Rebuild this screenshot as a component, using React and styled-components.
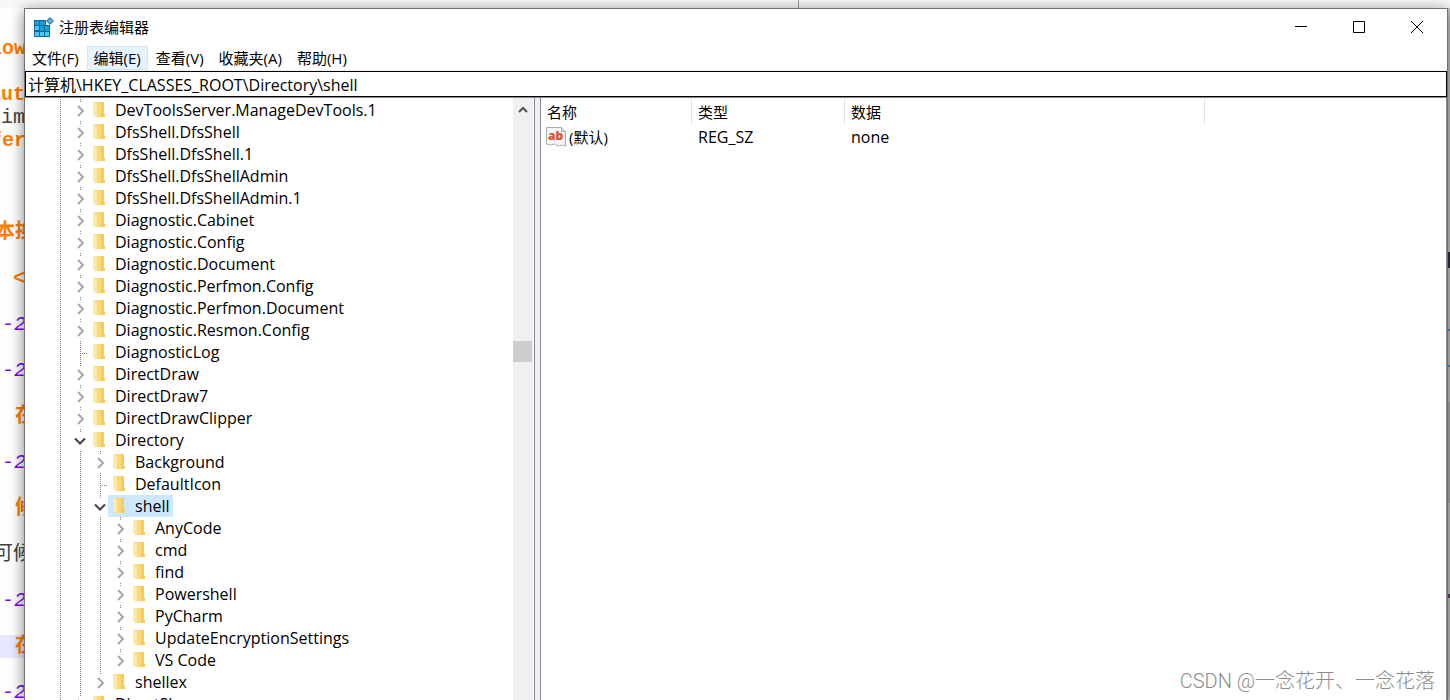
import React from 'react';
import styled, { createGlobalStyle, css } from 'styled-components';

const codeLines = [
  { text: 'low', indent: -10, color: '#ff8000', bold: true },
  {},
  { text: 'aut', indent: -11, color: '#ff8000', bold: true },
  { text: 'im', indent: 1, color: '#444' },
  { text: 'fer', indent: -10, color: '#ff8000', bold: true },
  {},
  {},
  {},
  { text: '本换', indent: -5, color: '#ff8000', bold: true },
  {},
  { text: '<', indent: 13, color: '#ff8000', bold: true },
  {},
  { text: '--2', indent: -10, color: '#8000ff', italic: true },
  {},
  { text: '--2', indent: -10, color: '#8000ff', italic: true },
  {},
  { text: '在', indent: 15, color: '#ff8000', bold: true },
  {},
  { text: '--2', indent: -10, color: '#8000ff', italic: true },
  {},
  { text: '候', indent: 15, color: '#ff8000', bold: true },
  {},
  { text: '可候', indent: -7, color: '#444' },
  {},
  { text: '--2', indent: -10, color: '#8000ff', italic: true },
  {},
  { text: '在', indent: 15, color: '#ff8000', bold: true, current: true },
  {},
  { text: '--2', indent: -10, color: '#8000ff', italic: true },
];

const menus = ['文件(F)', '编辑(E)', '查看(V)', '收藏夹(A)', '帮助(H)'];

const closed = (name, depth = 0) => ({ name, depth, state: 'closed' });
const open = (name, depth = 0) => ({ name, depth, state: 'open' });
const leaf = (name, depth = 0) => ({ name, depth, state: 'leaf' });

const keys = [
  closed('DevToolsServer.ManageDevTools.1'),
  closed('DfsShell.DfsShell'),
  closed('DfsShell.DfsShell.1'),
  closed('DfsShell.DfsShellAdmin'),
  closed('DfsShell.DfsShellAdmin.1'),
  closed('Diagnostic.Cabinet'),
  closed('Diagnostic.Config'),
  closed('Diagnostic.Document'),
  closed('Diagnostic.Perfmon.Config'),
  closed('Diagnostic.Perfmon.Document'),
  closed('Diagnostic.Resmon.Config'),
  leaf('DiagnosticLog'),
  closed('DirectDraw'),
  closed('DirectDraw7'),
  closed('DirectDrawClipper'),
  open('Directory'),
  closed('Background', 1),
  leaf('DefaultIcon', 1),
  { ...open('shell', 1), selected: true },
  closed('AnyCode', 2),
  closed('cmd', 2),
  closed('find', 2),
  closed('Powershell', 2),
  closed('PyCharm', 2),
  closed('UpdateEncryptionSettings', 2),
  { ...closed('VS Code', 2), last: true },
  { ...closed('shellex', 1), last: true },
  closed('DirectShow'),
];

function RegeditIcon() {
  return (
    <svg width="20" height="20" viewBox="0 0 20 20" aria-hidden="true">
      <path d="M0 3h12v5h4v12H0z" fill="#0a6c9c" />
      <path d="M1 9h4v4H1zM1 15h4v4H1zM6 15h4v4H6zM11 15h4v4h-4z" fill="#4cc8f4" />
      <path d="M1 4h4v4H1zM6 4h5v4H6zM6 9h4v5H6zM11 9h4v5h-4z" fill="#1a9fd8" />
      <path d="M16 0L20 4L16 8L12 4z" fill="#2f86ab" />
      <path d="M16 2L18 4L16 6L14 4z" fill="#6cc0e2" />
    </svg>
  );
}

function FolderIcon() {
  return (
    <svg width="13" height="18" viewBox="0 0 13 18" aria-hidden="true">
      <path d="M1 1h10v12l1 0v3H3z" fill="#fbd976" />
      <path d="M8 1h3v12h1v3H8z" fill="#f3cb62" />
      <path d="M0 1l4 2v14l-1 0l-3-3z" fill="#ffe9a6" />
    </svg>
  );
}

function StringIcon() {
  return (
    <svg width="20" height="20" viewBox="0 0 20 20" aria-hidden="true">
      <path d="M.5.5h15l4 4V19l-4-1-3 1-4-2-4 1-4-1z" fill="#f5f7f8" stroke="#a8adb0" />
      <path d="M15.500.5v4h4" fill="#dfe3e5" stroke="#a8adb0" />
      <text x="2" y="13" fontFamily="'Open Sans', sans-serif" fontWeight="800" fontSize="12" fill="#dc5434">ab</text>
    </svg>
  );
}

function Arrow({ open: isOpen }) {
  return (
    <svg width="12" height="12" viewBox="0 0 12 12" fill="none" strokeWidth="2" aria-hidden="true">
      {isOpen
        ? <path d="M1 3.500l5 5 5-5" stroke="#404040" />
        : <path d="M4 1l5 5-5 5" stroke="#a6a6a6" />}
    </svg>
  );
}

function TreeItem({ item }) {
  return (
    <Row>
      {Array.from({ length: item.depth + 1 }, (_, i) => <Guide key={i} />)}
      <Toggle $state={item.state} $last={item.last}>
        {item.state !== 'leaf' && (
          <ToggleButton aria-label={item.name} aria-expanded={item.state === 'open'}>
            <Arrow open={item.state === 'open'} />
          </ToggleButton>
        )}
      </Toggle>
      <Key $selected={item.selected}>
        <FolderIcon />
        {item.name}
      </Key>
    </Row>
  );
}

export default function App() {
  return (
    <Desktop>
      <GlobalStyle />
      <TopStrip><Pane /><Pane /></TopStrip>
      <Editor>
        {codeLines.map((line, i) => (
          <CodeLine key={i} $indent={line.indent} $color={line.color} $bold={line.bold} $italic={line.italic} $current={line.current}>
            {line.text}
          </CodeLine>
        ))}
      </Editor>
      <Window>
        <TitleBar>
          <RegeditIcon />
          <Title>注册表编辑器</Title>
          <WindowButton aria-label="最小化">
            <svg width="12" height="12" viewBox="0 0 12 12"><path d="M0 5.500h12" stroke="#000" /></svg>
          </WindowButton>
          <WindowButton aria-label="最大化">
            <svg width="12" height="12" viewBox="0 0 12 12"><path d="M.5.5h11v11H.5z" fill="none" stroke="#000" /></svg>
          </WindowButton>
          <WindowButton aria-label="关闭">
            <svg width="12" height="12" viewBox="0 0 12 12"><path d="M0 0l12 12M12 0L0 12" stroke="#000" /></svg>
          </WindowButton>
        </TitleBar>
        <MenuBar>
          {menus.map((menu, i) => <MenuButton key={menu} $active={i === 1}>{menu}</MenuButton>)}
        </MenuBar>
        <Address aria-label="地址" defaultValue="计算机\HKEY_CLASSES_ROOT\Directory\shell" />
        <Panels>
          <TreePanel>
            <Tree>
              {keys.map((item) => <TreeItem key={item.name} item={item} />)}
            </Tree>
            <ScrollBar>
              <ScrollUp aria-label="向上滚动">
                <svg width="12" height="8" viewBox="0 0 12 8"><path d="M2 6l4-4 4 4" fill="none" stroke="#505050" strokeWidth="2" /></svg>
              </ScrollUp>
              <Thumb />
            </ScrollBar>
          </TreePanel>
          <Splitter />
          <ValuePanel>
            <Values>
              <thead>
                <tr>
                  <Heading $width={151}>名称</Heading>
                  <Heading $width={153}>类型</Heading>
                  <Heading $width={360}>数据</Heading>
                </tr>
              </thead>
              <tbody>
                <tr>
                  <NameCell><ValueName><StringIcon />(默认)</ValueName></NameCell>
                  <Cell>REG_SZ</Cell>
                  <Cell>none</Cell>
                </tr>
              </tbody>
            </Values>
          </ValuePanel>
        </Panels>
      </Window>
      <RightStrip />
      <Watermark>CSDN @一念花开、一念花落</Watermark>
    </Desktop>
  );
}

const GlobalStyle = createGlobalStyle`
  * {
    box-sizing: border-box;
  }
  body {
    margin: 0;
    color: #000;
    font: 15px/22px 'Open Sans', 'Noto Sans CJK SC', sans-serif;
  }
  button, input {
    font: inherit;
    color: inherit;
    border: 0;
    border-radius: 0;
    padding: 0;
    background: none;
  }
`;

const Desktop = styled.div`
  position: relative;
  display: grid;
  grid-template: 8px minmax(0, 1fr) / 24px minmax(0, 1fr) 2px;
  height: 100vh;
  overflow: hidden;
  background: #fff;
`;

const TopStrip = styled.div`
  grid-column: 1 / -1;
  display: grid;
  grid-template-columns: 55% 45%;
  background: #f8f8f8;
`;

const Pane = styled.div`
  & + & {
    border-left: 1px solid #999;
  }
`;

const Editor = styled.div`
  padding-top: 29px;
  overflow: hidden;
`;

const CodeLine = styled.div`
  height: 23px;
  font: 20px/24px 'Liberation Mono', 'Noto Sans CJK SC', monospace;
  white-space: nowrap;
  text-indent: ${(p) => p.$indent || 0}px;
  color: ${(p) => p.$color};
  font-weight: ${(p) => (p.$bold ? 700 : 400)};
  font-style: ${(p) => (p.$italic ? 'italic' : 'normal')};
  background: ${(p) => (p.$current ? '#e8e8ff' : 'transparent')};
`;

const Window = styled.main`
  position: relative;
  display: flex;
  flex-direction: column;
  min-height: 0;
  border: 1px solid #707070;
  border-bottom: 0;
  background: #fff;
  box-shadow: 0 3px 14px rgba(0, 0, 0, 0.5);
`;

const TitleBar = styled.header`
  display: flex;
  align-items: center;
  height: 37px;
  padding: 0 1px 2px 9px;
  flex: none;
`;

const Title = styled.h1`
  flex: 1;
  margin: 0 0 0 5px;
  font-size: 15px;
  font-weight: 400;
`;

const WindowButton = styled.button`
  display: flex;
  align-items: center;
  justify-content: center;
  width: 58px;
  height: 35px;
`;

const MenuBar = styled.nav`
  display: flex;
  gap: 1px;
  flex: none;
  height: 25px;
  border-bottom: 1px solid #f0f0f0;
`;

const MenuButton = styled.button`
  height: 24px;
  padding: 0 6px;
  border: 1px solid transparent;
  ${(p) => p.$active && css`
    background: #e5f3ff;
    border-color: #cce8ff;
  `}
`;

const Address = styled.input`
  flex: none;
  width: 100%;
  height: 26px;
  padding: 0 2px;
  border: 1px solid #000;
  outline: 0;
  font-size: 16px;
`;

const Panels = styled.div`
  flex: 1;
  display: flex;
  min-height: 0;
  border-top: 1px solid #828790;
`;

const TreePanel = styled.section`
  display: flex;
  width: 510px;
  flex: none;
  border-right: 1px solid #828790;
`;

const Tree = styled.div`
  flex: 1;
  min-width: 0;
  overflow: hidden;
  padding: 1px 0 0 25px;
  font-size: 16px;
`;

const Row = styled.div`
  display: flex;
  height: 22px;
`;

const dots = css`
  background-image: repeating-linear-gradient(#808080 0 1px, transparent 1px 2px);
  background-size: 1px 100%;
  background-repeat: no-repeat;
`;

const Guide = styled.span`
  width: 20px;
  flex: none;
  ${dots}
  background-position: 10px 0;
`;

const Toggle = styled.span`
  display: flex;
  justify-content: center;
  align-items: center;
  width: 18px;
  padding: 2px 0 0 2px;
  flex: none;
  ${dots}
  background-position: 10px 0;
  ${(p) => p.$state === 'leaf' && css`
    background-image:
      repeating-linear-gradient(#808080 0 1px, transparent 1px 2px),
      repeating-linear-gradient(to right, #808080 0 1px, transparent 1px 2px);
    background-size: 1px 100%, 8px 1px;
    background-position: 10px 0, 10px 12px;
  `}
  ${(p) => p.$last && css`
    background-size: 1px 50%;
  `}
`;

const ToggleButton = styled.button`
  display: flex;
  align-items: center;
  justify-content: center;
  width: 16px;
  height: 18px;
  background: #fff;
`;

const Key = styled.div`
  display: flex;
  align-items: center;
  gap: 9px;
  padding: 0 3px 0 5px;
  white-space: nowrap;
  background: ${(p) => (p.$selected ? '#cce8ff' : 'transparent')};
`;

const ScrollBar = styled.div`
  display: flex;
  flex-direction: column;
  width: 20px;
  margin-right: 1px;
  background: #f0f0f0;
`;

const ScrollUp = styled.button`
  display: flex;
  align-items: center;
  justify-content: center;
  height: 24px;
`;

const Thumb = styled.div`
  width: 19px;
  height: 21px;
  margin-top: 219px;
  background: #cdcdcd;
`;

const Splitter = styled.div`
  width: 5px;
  flex: none;
  background: #f0f0f0;
`;

const ValuePanel = styled.section`
  flex: 1;
  min-width: 0;
  border: 1px solid #828790;
  border-width: 0 1px;
`;

const Values = styled.table`
  border-collapse: separate;
  border-spacing: 0;
  table-layout: fixed;
  width: 664px;
`;

const Heading = styled.th`
  width: ${(p) => p.$width}px;
  height: 27px;
  padding: 0 6px;
  border-right: 1px solid #e5e5e5;
  font-weight: 400;
  text-align: left;
`;

const Cell = styled.td`
  height: 24px;
  padding: 0 6px;
  font-size: 16px;
`;

const NameCell = styled(Cell)`
  padding: 0 5px;
  font-size: 15px;
`;

const ValueName = styled.span`
  display: flex;
  align-items: center;
  gap: 3px;
`;

const RightStrip = styled.div`
  background: linear-gradient(
    #c8c8c8 244px, #303040 244px 260px,
    #c8c8c8 260px 321px, #4a9ad8 321px 323px,
    #c8c8c8 323px 357px, #4a9ad8 357px 359px,
    #c8c8c8 359px 394px, #b0b0b0 394px 495px,
    #c8c8c8 495px 586px, #604070 586px 590px,
    #c8c8c8 590px
  );
`;

const Watermark = styled.div`
  position: absolute;
  right: 15px;
  bottom: 5px;
  font: 300 20px/28px Roboto, 'Noto Sans CJK SC', sans-serif;
  color: #8c8c8c;
`;
